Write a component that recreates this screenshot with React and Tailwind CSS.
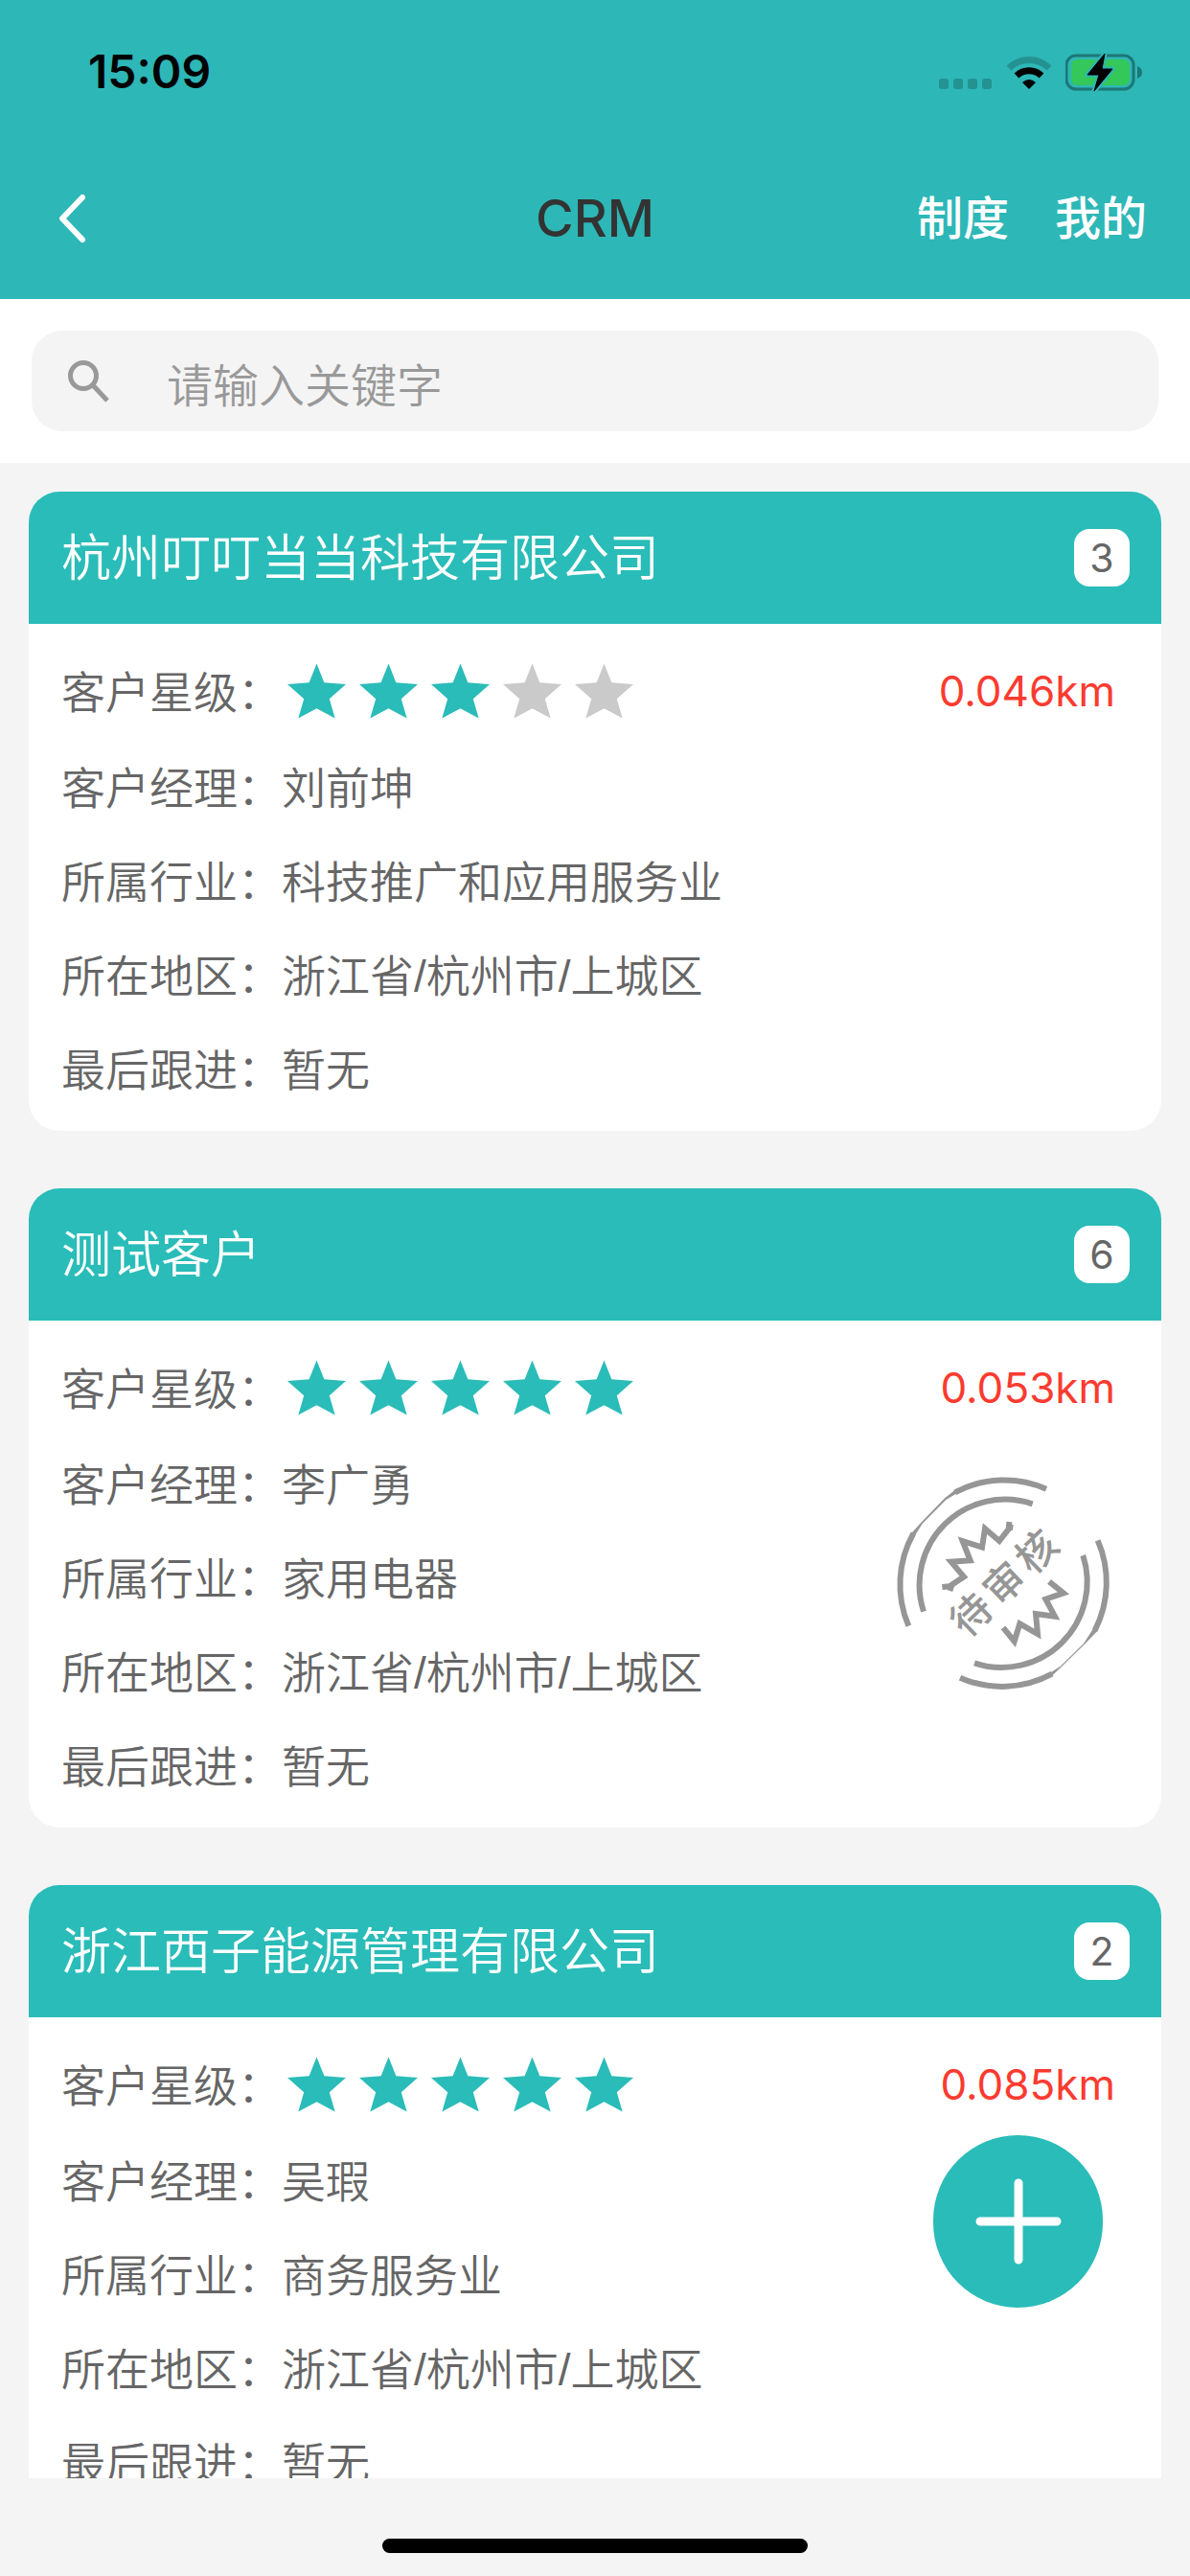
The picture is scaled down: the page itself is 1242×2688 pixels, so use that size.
import { useState } from 'react';

const customers = [
  { id: 1, name: '杭州叮叮当当科技有限公司', count: 3, stars: 3, distance: '0.046km', manager: '刘前坤', industry: '科技推广和应用服务业', region: '浙江省/杭州市/上城区', lastFollow: '暂无', pending: false },
  { id: 2, name: '测试客户', count: 6, stars: 5, distance: '0.053km', manager: '李广勇', industry: '家用电器', region: '浙江省/杭州市/上城区', lastFollow: '暂无', pending: true },
  { id: 3, name: '浙江西子能源管理有限公司', count: 2, stars: 5, distance: '0.085km', manager: '吴瑕', industry: '商务服务业', region: '浙江省/杭州市/上城区', lastFollow: '暂无', pending: false },
];

const StatusBar = () => (
  <div className="flex h-36 items-center justify-between pt-1.5 pr-[50px] pl-[92px]">
    <span className="text-[48px] leading-none font-semibold text-black">15:09</span>
    <div className="flex items-center">
      <svg className="mr-[15px] h-9 w-[55px]" viewBox="0 0 55 36" fill="#259292">
        <rect x="0" y="25" width="10" height="11" rx="3" />
        <rect x="15" y="25" width="10" height="11" rx="3" />
        <rect x="30" y="25" width="10" height="11" rx="3" />
        <rect x="45" y="25" width="10" height="11" rx="3" />
      </svg>
      <svg className="mr-[14px] h-9 w-12" viewBox="0 0 48 36" fill="none">
        <path d="M3 14 A30 30 0 0 1 45 14" stroke="#259292" strokeWidth="7" />
        <path d="M11 22 A19 19 0 0 1 37 22" stroke="#000" strokeWidth="7" />
        <path d="M17 29 Q24 23 31 29 L24 36 Z" fill="#000" />
      </svg>
      <svg className="h-10 w-20" viewBox="0 0 80 40" fill="none">
        <rect x="1" y="3" width="70" height="35" rx="10" stroke="#1d7776" strokeWidth="3" />
        <rect x="6" y="7" width="61" height="27" rx="6" fill="#34c759" />
        <path d="M75 14 Q80 16 80 20.500 Q80 25 75 27 Z" fill="#1d7776" />
        <path d="M41 1 L23 23 H35 L30 40 L49 17 H38 Z" fill="#000" stroke="#2db7b7" strokeWidth="5" strokeLinejoin="round" />
        <path d="M41 1 L23 23 H35 L30 40 L49 17 H38 Z" fill="#000" stroke="#000" strokeLinejoin="round" />
      </svg>
    </div>
  </div>
);

const NavBar = () => (
  <nav className="grid h-[168px] grid-cols-3 items-center px-[45px]">
    <button type="button" aria-label="返回" className="justify-self-start pl-[15px]">
      <svg className="h-[52px] w-8" viewBox="0 0 32 52" fill="none" stroke="#fff" strokeWidth="6" strokeLinecap="round" strokeLinejoin="round">
        <path d="M26 4 L5 26 L26 48" />
      </svg>
    </button>
    <h1 className="justify-self-center text-[54px] leading-none font-medium text-[#333]">CRM</h1>
    <div className="flex gap-12 justify-self-end text-[48px] leading-none font-medium text-white">
      <button type="button">制度</button>
      <button type="button">我的</button>
    </div>
  </nav>
);

const Star = ({ filled }) => (
  <svg className={`h-[58px] w-[61px] ${filled ? 'fill-[#2abcb8]' : 'fill-[#cacaca]'}`} viewBox="0 0 62 58">
    <path d="M31 0 L39 20 L62 22 L44.500 37.500 L50.500 58 L31 47.500 L11.500 58 L17.500 37.500 L0 22 L23 20 Z" />
  </svg>
);

// Grey "pending review" stamp
const PendingStamp = () => (
  <svg className="absolute top-[260px] right-3 h-[300px] w-[300px]" viewBox="0 0 900 900" fill="none" stroke="#969696" strokeWidth="18">
    <path d="M576 161 A328 328 0 0 0 290 172" />
    <path d="M160 300 A328 328 0 0 0 145 590" />
    <path d="M298 158 L258 190 L184 266 L150 304 L164 308 L188 270 L262 195 L304 170 Z" fill="#969696" stroke="none" />
    <path d="M533 208 A268 268 0 0 0 192 545" />
    <path d="M306 752 A328 328 0 0 0 594 740" />
    <path d="M728 604 A328 328 0 0 0 737 322" />
    <path d="M590 750 L622 719 L696 647 L738 604 L722 600 L693 645 L620 716 L586 738 Z" fill="#969696" stroke="none" />
    <path d="M351 706 A268 268 0 0 0 691 369" />
    <path d="M250 468 L273 466 L318 436 L278 389 L338 385 L314 324 L375 344 L384 285 L429 324 L458 287 L460 264" />
    <path d="M274 480 L280 462 M472 282 L452 280" />
    <path d="M585 451 L630 487 L574 506 L603 560 L543 552 L549 615 L493 583 L476 638 L441 595" />
    <g transform="translate(445 457) rotate(-44)" fill="#969696" stroke="none">
      <text x="-142 0 142" y="44" textAnchor="middle" className="text-[126px] font-medium">待审核</text>
    </g>
  </svg>
);

const Row = ({ label, children }) => (
  <div className="flex h-[98px] items-center first:h-[103px]">
    <dt className="pt-1">{label}：</dt>
    <dd className="flex flex-1 items-center">{children}</dd>
  </div>
);

const CustomerCard = ({ customer }) => (
  <li className="relative overflow-hidden rounded-[32px] bg-white">
    <div className="flex h-[138px] items-center justify-between bg-[#2abcb8] pr-[33px] pl-[34px]">
      <h2 className="pt-0.5 text-[52px] leading-none font-[350] text-white">{customer.name}</h2>
      <span className="flex h-[60px] w-[58px] items-center justify-center rounded-2xl bg-white text-[41px] leading-none text-[#666]">
        {customer.count}
      </span>
    </div>
    <dl className="px-[34px] pt-[18px] pb-4 font-['Liberation_Sans','Noto_Sans_CJK_SC',sans-serif] text-[46px] leading-none font-[350] text-[#666]">
      <Row label="客户星级">
        <span className="flex flex-1 gap-[14px] pl-[6px]" role="img" aria-label={`${customer.stars}星`}>
          {[1, 2, 3, 4, 5].map(n => <Star key={n} filled={n <= customer.stars} />)}
        </span>
        <span className="pr-[14px] font-[Inter,sans-serif] text-[44px] font-normal text-[#fb3b30]">{customer.distance}</span>
      </Row>
      <Row label="客户经理"><span className="pt-1">{customer.manager}</span></Row>
      <Row label="所属行业"><span className="pt-1">{customer.industry}</span></Row>
      <Row label="所在地区"><span className="pt-1">{customer.region}</span></Row>
      <Row label="最后跟进"><span className="pt-1">{customer.lastFollow}</span></Row>
    </dl>
    {customer.pending && <PendingStamp />}
  </li>
);

const App = () => {
  const [keyword, setKeyword] = useState('');

  const visible = customers.filter(c => c.name.includes(keyword));

  return (
    <div className="flex h-screen flex-col bg-[#f4f4f4] font-[Inter,'Noto_Sans_CJK_SC',sans-serif]">
      <header className="bg-[#2db7b7]">
        <StatusBar />
        <NavBar />
      </header>

      {/* Search */}
      <div className="bg-white p-[33px]">
        <label className="flex h-[105px] items-center rounded-[32px] bg-[#f4f4f4] pl-[38px]">
          <svg className="h-11 w-11 shrink-0" viewBox="0 0 44 44" fill="none" stroke="#999" strokeWidth="5">
            <circle cx="16" cy="16" r="13.500" />
            <path d="M26 26 L41 42" />
          </svg>
          <input
            type="text"
            aria-label="请输入关键字"
            placeholder="请输入关键字"
            value={keyword}
            onChange={e => setKeyword(e.target.value)}
            className="ml-[59px] h-full flex-1 bg-transparent pt-2.5 text-[48px] font-[350] text-[#666] outline-none placeholder:text-[#999]"
          />
        </label>
      </div>

      {/* Customer list */}
      <ul className="flex min-h-0 flex-1 flex-col gap-[60px] overflow-y-auto px-[30px] pt-[30px] [scrollbar-width:none] *:shrink-0">
        {visible.map(c => <CustomerCard key={c.id} customer={c} />)}
      </ul>

      <button type="button" aria-label="新增客户" className="fixed right-[91px] bottom-[280px] flex h-[180px] w-[177px] items-center justify-center rounded-full bg-[#2abcb8]">
        <svg className="h-[90px] w-[90px]" viewBox="0 0 90 90" stroke="#fff" strokeWidth="9" strokeLinecap="round">
          <path d="M45 5 V85 M5 45 H85" />
        </svg>
      </button>

      <div className="flex h-[102px] justify-center pt-[63px]">
        <div className="h-[15px] w-[444px] rounded-full bg-black" />
      </div>
    </div>
  );
};

export default App;
